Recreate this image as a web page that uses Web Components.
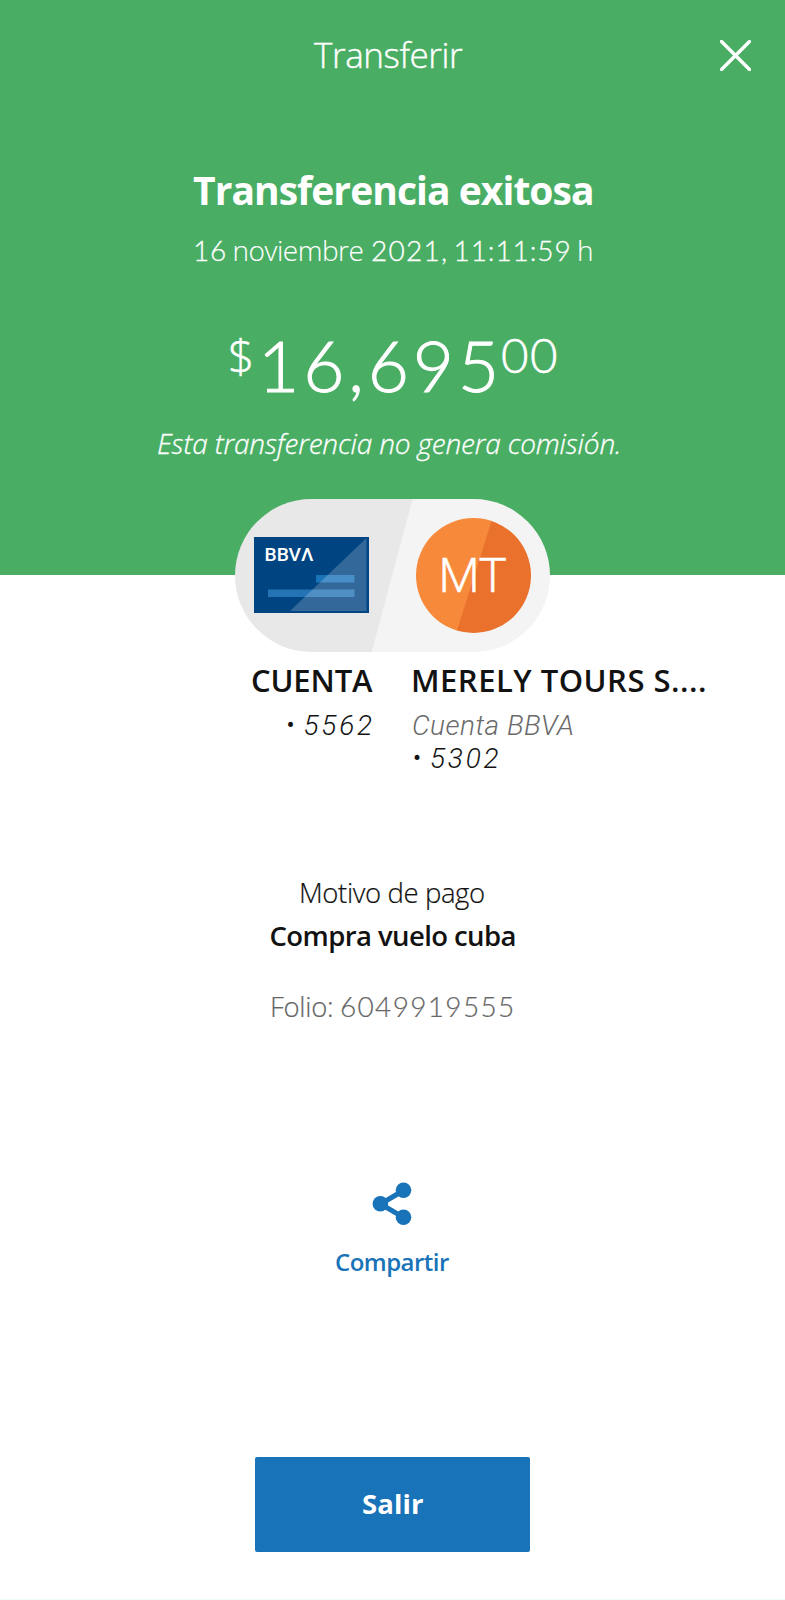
<!DOCTYPE html>
<html lang="es">
<head>
<meta charset="utf-8">
<meta name="viewport" content="width=device-width, initial-scale=1">
<title>Transferir</title>
<style>
  body {
    margin: 0;
    background: #fff;
    font-family: "Open Sans", "Liberation Sans", sans-serif;
    color: #121212;
  }
</style>
</head>
<body>
<transfer-receipt></transfer-receipt>

<script>
// One line of text, tracked so that its ink fills exactly `width` pixels
class FitText extends HTMLElement {
  constructor() {
    super();
    this.attachShadow({ mode: "open" });
  }

  static get styles() {
    return /* css */`
      :host {
        display: block;
        flex: none;
        white-space: nowrap;
      }

      span {
        display: inline-block;
      }
    `;
  }

  connectedCallback() {
    this.render();
    this.fit();
  }

  fit() {
    const width = Number(this.getAttribute("width"));
    const text = this.textContent;
    const style = getComputedStyle(this);
    const ctx = document.createElement("canvas").getContext("2d");
    ctx.font = `${style.fontStyle} ${style.fontWeight} ${style.fontSize} ${style.fontFamily}`;
    const box = ctx.measureText(text);
    const ink = box.actualBoundingBoxLeft + box.actualBoundingBoxRight;
    const gaps = text.length - 1;
    const span = this.shadowRoot.querySelector("span");
    this.style.width = `${width}px`;
    span.style.letterSpacing = gaps ? `${(width - ink) / gaps}px` : "normal";
    span.style.marginLeft = `${box.actualBoundingBoxLeft}px`;
  }

  render() {
    this.shadowRoot.innerHTML = /* html */`
    <style>${FitText.styles}</style>
    <span><slot></slot></span>
    `;
  }
}

class ReceiptHeader extends HTMLElement {
  constructor() {
    super();
    this.attachShadow({ mode: "open" });
  }

  static get styles() {
    return /* css */`
      :host {
        display: flex;
        flex-direction: column;
        align-items: center;
        box-sizing: border-box;
        height: 575px;
        padding-top: 31px;
        background: #49AE64;
        color: #fff;
      }

      .bar {
        display: grid;
        grid-template-columns: 1fr auto 1fr;
        align-items: center;
        align-self: stretch;
        box-sizing: border-box;
        height: 48px;
        padding: 0 34px 0 26px;
      }

      .bar fit-text {
        font-size: 35px;
        font-weight: 300;
        line-height: 48px;
        -webkit-text-stroke: 0.4px;
      }

      .close {
        grid-column: 3;
        justify-self: end;
        display: block;
      }

      .title {
        margin-top: 87px;
        font-size: 39px;
        font-weight: 700;
        line-height: 48px;
      }

      .date {
        display: flex;
        gap: 9.5px;
        margin: 18px 0 0 1px;
        font-family: Lato, sans-serif;
        font-size: 28px;
        font-weight: 300;
        line-height: 36px;
        -webkit-text-stroke: 0.3px;
      }

      .word {
        font-family: "Open Sans", sans-serif;
        -webkit-text-stroke: 0.1px;
      }

      .amount {
        display: flex;
        margin: 57px 0 0 1px;
        height: 79px;
        font-family: Lato, sans-serif;
        font-weight: 300;
        font-size: 71px;
        line-height: 80px;
        -webkit-text-stroke: 1px;
      }

      .small {
        margin-top: 5px;
        font-size: 47.5px;
        line-height: 50px;
        -webkit-text-stroke: 0.5px;
      }

      .symbol {
        margin-right: 12px;
        font-family: "Open Sans", sans-serif;
        font-size: 46px;
      }

      .cents {
        margin-left: 8px;
      }

      .note {
        margin: 21px 8px 0 0;
        font-size: 28px;
        font-weight: 300;
        font-style: italic;
        line-height: 36px;
        -webkit-text-stroke: 0.3px;
      }
    `;
  }

  connectedCallback() {
    this.render();
  }

  render() {
    this.shadowRoot.innerHTML = /* html */`
    <style>${ReceiptHeader.styles}</style>
    <div class="bar">
      <span></span>
      <fit-text width="149">Transferir</fit-text>
      <svg class="close" width="31" height="31" viewBox="0 0 31 31">
        <path d="M1.5 1.5 29.5 29.5M29.5 1.5 1.5 29.5" stroke="#fff" stroke-width="3.4" stroke-linecap="round"/>
      </svg>
    </div>
    <fit-text class="title" width="399">Transferencia exitosa</fit-text>
    <div class="date">
      <fit-text width="30">16</fit-text>
      <fit-text class="word" width="128">noviembre</fit-text>
      <fit-text width="74">2021,</fit-text>
      <fit-text width="114">11:11:59</fit-text>
      <fit-text class="word" width="12">h</fit-text>
    </div>
    <div class="amount">
      <fit-text class="small symbol" width="23">$</fit-text>
      <fit-text width="229">16,695</fit-text>
      <fit-text class="small cents" width="54">00</fit-text>
    </div>
    <fit-text class="note" width="461">Esta transferencia no genera comisión.</fit-text>
    `;
  }
}

class AccountCard extends HTMLElement {
  constructor() {
    super();
    this.attachShadow({ mode: "open" });
  }

  static get styles() {
    return /* css */`
      :host {
        display: block;
        width: 115px;
        height: 76px;
        margin-bottom: 2px;
      }

      svg {
        display: block;
      }

      text {
        font: 500 17.5px Roboto, sans-serif;
        fill: #fff;
      }
    `;
  }

  connectedCallback() {
    this.render();
  }

  render() {
    this.shadowRoot.innerHTML = /* html */`
    <style>${AccountCard.styles}</style>
    <svg width="115" height="76" viewBox="0 0 115 76">
      <rect width="115" height="76" fill="#004481"/>
      <rect x="62" y="38" width="38.5" height="7.5" fill="#1973B8"/>
      <rect x="14" y="52.5" width="86.5" height="7.5" fill="#2474B5"/>
      <path d="M112.5 1V74H36Z" fill="#fff" opacity="0.2"/>
      <text x="10.5" y="24" textLength="49" lengthAdjust="spacingAndGlyphs">BBVΛ</text>
    </svg>
    `;
  }
}

class ContactAvatar extends HTMLElement {
  constructor() {
    super();
    this.attachShadow({ mode: "open" });
  }

  static get styles() {
    return /* css */`
      :host {
        display: flex;
        justify-content: center;
        align-items: center;
        box-sizing: border-box;
        width: 115px;
        height: 115px;
        padding: 1px 0 0 2px;
        border-radius: 50%;
        background: linear-gradient(107.5deg, #F7893B 50.2%, #E9712C 50.9%);
        font-family: Roboto, sans-serif;
        font-size: 47.5px;
        font-weight: 300;
        line-height: 56px;
        color: #fff;
        -webkit-text-stroke: 0.4px;
      }
    `;
  }

  connectedCallback() {
    this.render();
  }

  render() {
    this.shadowRoot.innerHTML = /* html */`
    <style>${ContactAvatar.styles}</style>
    <fit-text width="64">${this.getAttribute("initials")}</fit-text>
    `;
  }
}

class TransferRoute extends HTMLElement {
  constructor() {
    super();
    this.attachShadow({ mode: "open" });
  }

  static get styles() {
    return /* css */`
      :host {
        display: flex;
        justify-content: space-between;
        align-items: center;
        box-sizing: border-box;
        width: 315px;
        height: 153px;
        margin: -76px auto 0;
        padding: 0 19px;
        border-radius: 77px;
        background: linear-gradient(105deg, #E8E8E8 49.7%, #F4F4F4 50.1%);
      }
    `;
  }

  connectedCallback() {
    this.render();
  }

  render() {
    this.shadowRoot.innerHTML = /* html */`
    <style>${TransferRoute.styles}</style>
    <slot></slot>
    `;
  }
}

class AccountParty extends HTMLElement {
  constructor() {
    super();
    this.attachShadow({ mode: "open" });
  }

  static get styles() {
    return /* css */`
      :host {
        display: flex;
        flex-direction: column;
        align-items: flex-start;
        line-height: 33px;
        font-family: Roboto, sans-serif;
        font-size: 28px;
        font-weight: 300;
        font-style: italic;
      }

      :host([side="from"]) {
        align-items: flex-end;
      }

      ::slotted([slot="name"]) {
        margin-bottom: 9px;
        font-family: "Open Sans", sans-serif;
        font-size: 31px;
        font-weight: 600;
        font-style: normal;
        line-height: 40px;
      }

      ::slotted([slot="bank"]) {
        color: #6A6A6A;
      }

      .number {
        display: flex;
        align-items: center;
        gap: 11px;
        padding: 0 1px;
      }

      .number::before {
        content: "•";
        width: 6px;
        font: normal 400 24px/33px Roboto, sans-serif;
        display: flex;
        justify-content: center;
      }
    `;
  }

  connectedCallback() {
    this.render();
  }

  render() {
    this.shadowRoot.innerHTML = /* html */`
    <style>${AccountParty.styles}</style>
    <slot name="name"></slot>
    <slot name="bank"></slot>
    <div class="number"><fit-text width="67.5">${this.getAttribute("number")}</fit-text></div>
    `;
  }
}

class ShareAction extends HTMLElement {
  constructor() {
    super();
    this.attachShadow({ mode: "open" });
  }

  static get styles() {
    return /* css */`
      :host {
        display: flex;
        flex-direction: column;
        align-items: center;
        gap: 20px;
        color: #1973B8;
        font-size: 24px;
        font-weight: 600;
        line-height: 32px;
      }

      svg {
        margin-right: 2px;
      }
    `;
  }

  connectedCallback() {
    this.render();
  }

  render() {
    this.shadowRoot.innerHTML = /* html */`
    <style>${ShareAction.styles}</style>
    <svg width="40" height="44" viewBox="0 0 40 44" fill="currentColor">
      <path d="M31.5 8.5 8.5 22 31.5 35.3" fill="none" stroke="currentColor" stroke-width="5"/>
      <circle cx="31.5" cy="8.3" r="7.8"/>
      <circle cx="8.4" cy="21.8" r="7.8"/>
      <circle cx="31.5" cy="35.3" r="7.8"/>
    </svg>
    <slot></slot>
    `;
  }
}

class PrimaryButton extends HTMLElement {
  constructor() {
    super();
    this.attachShadow({ mode: "open" });
  }

  static get styles() {
    return /* css */`
      :host {
        display: block;
      }

      button {
        display: flex;
        justify-content: center;
        align-items: center;
        box-sizing: border-box;
        width: 275px;
        height: 95px;
        padding: 0 0 2px 1px;
        border: 0;
        border-radius: 2px;
        background: #1973B8;
        color: #fff;
        font: inherit;
        font-size: 27.5px;
        font-weight: 700;
        line-height: 36px;
      }
    `;
  }

  connectedCallback() {
    this.render();
  }

  render() {
    this.shadowRoot.innerHTML = /* html */`
    <style>${PrimaryButton.styles}</style>
    <button><fit-text width="60">${this.getAttribute("label")}</fit-text></button>
    `;
  }
}

class TransferReceipt extends HTMLElement {
  constructor() {
    super();
    this.attachShadow({ mode: "open" });
  }

  static get styles() {
    return /* css */`
      :host {
        display: flex;
        flex-direction: column;
        box-sizing: border-box;
        height: 1600px;
        overflow: hidden;
        border-bottom: 1px solid #F1FCFA;
      }

      .parties {
        display: grid;
        grid-template-columns: 373px 1fr;
        column-gap: 40px;
        margin-top: 8px;
        height: 116px;
      }

      .details {
        display: flex;
        flex-direction: column;
        align-items: center;
        margin-top: 95px;
        font-size: 27.5px;
        line-height: 43px;
      }

      .reason {
        font-weight: 300;
        -webkit-text-stroke: 0.2px;
      }

      .concept {
        font-weight: 600;
      }

      .folio {
        display: flex;
        gap: 9px;
        margin: 28px 1px 0 0;
        font-weight: 300;
        color: #666;
        -webkit-text-stroke: 0.2px;
      }

      .folio .value {
        font-family: Lato, sans-serif;
        font-size: 28px;
      }

      share-action {
        margin-top: 154px;
      }

      primary-button {
        margin: 179px auto 0;
      }
    `;
  }

  connectedCallback() {
    this.render();
  }

  render() {
    this.shadowRoot.innerHTML = /* html */`
    <style>${TransferReceipt.styles}</style>
    <receipt-header></receipt-header>
    <transfer-route>
      <account-card></account-card>
      <contact-avatar initials="MT"></contact-avatar>
    </transfer-route>
    <div class="parties">
      <account-party side="from" number="5562">
        <fit-text slot="name" width="121">CUENTA</fit-text>
      </account-party>
      <account-party side="to" number="5302">
        <fit-text slot="name" width="292">MERELY TOURS S....</fit-text>
        <fit-text slot="bank" width="160">Cuenta BBVA</fit-text>
      </account-party>
    </div>
    <div class="details">
      <fit-text class="reason" width="183">Motivo de pago</fit-text>
      <fit-text class="concept" width="244">Compra vuelo cuba</fit-text>
      <div class="folio">
        <fit-text width="60">Folio:</fit-text>
        <fit-text class="value" width="171">6049919555</fit-text>
      </div>
    </div>
    <share-action><fit-text width="113">Compartir</fit-text></share-action>
    <primary-button label="Salir"></primary-button>
    `;
  }
}

customElements.define("fit-text", FitText);
customElements.define("receipt-header", ReceiptHeader);
customElements.define("account-card", AccountCard);
customElements.define("contact-avatar", ContactAvatar);
customElements.define("transfer-route", TransferRoute);
customElements.define("account-party", AccountParty);
customElements.define("share-action", ShareAction);
customElements.define("primary-button", PrimaryButton);
customElements.define("transfer-receipt", TransferReceipt);
</script>
</body>
</html>
